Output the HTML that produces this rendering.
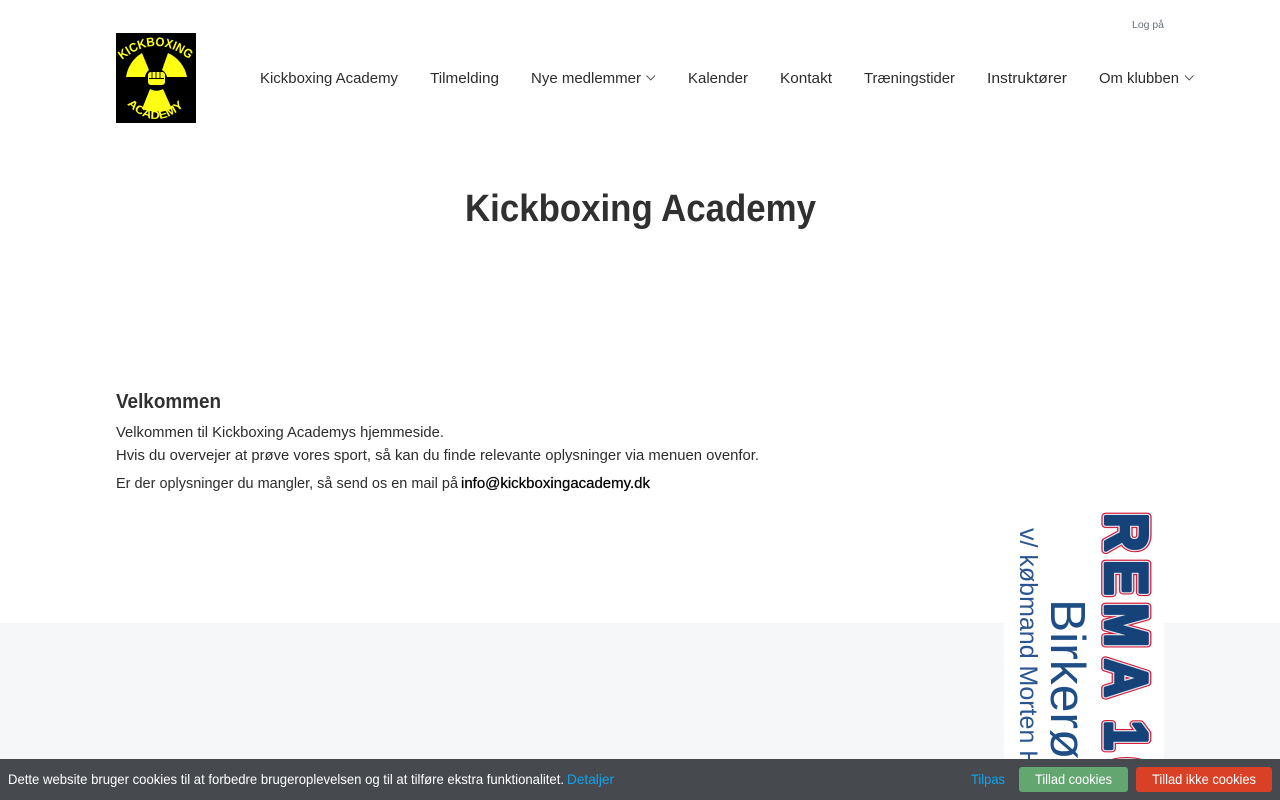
<!DOCTYPE html>
<html lang="da">
<head>
<meta charset="utf-8">
<title>Kickboxing Academy</title>
<style>
html,body{margin:0;padding:0;width:1280px;height:800px;overflow:hidden;background:#fff}
svg{position:absolute;left:0;top:0;display:block}
text{font-family:"Liberation Sans",sans-serif}
</style>
</head>
<body>
<svg width="1280" height="800" viewBox="0 0 1280 800" xmlns="http://www.w3.org/2000/svg">
  <rect x="0" y="623" width="1280" height="177" fill="#f6f7f9"/>

  <!-- Logo -->
  <rect x="116" y="33" width="80" height="90" fill="#000"/>
  <g fill="#ffff14">
    <path d="M142 53 A33 33 0 0 0 126 77 L145 77 A11 11 0 0 1 149 70Z"/>
    <path d="M168 53 A33 33 0 0 1 187 77 L167 77 A11 11 0 0 0 162 70Z"/>
    <path d="M150 89 L142 109 Q157 114 172 109 L163 89 A13 13 0 0 1 150 89Z"/>
    <rect x="148" y="72" width="17" height="13" rx="3"/>
  </g>
  <g stroke="#000" stroke-width=".9" fill="none"><path d="M152 72v6M156 72v6M160 72v6M149 78.5h15"/></g>
  <defs>
    <path id="arcT" d="M122 60 Q156 32 190 60"/>
    <path id="arcB" d="M127 104 Q156 134 186 104"/>
  </defs>
  <text font-size="12.5" font-weight="700" fill="#ffff14"><textPath href="#arcT" textLength="74" lengthAdjust="spacingAndGlyphs">KICKBOXING</textPath></text>
  <text font-size="11.5" font-weight="700" fill="#ffff14"><textPath href="#arcB" textLength="65" lengthAdjust="spacingAndGlyphs">ACADEMY</textPath></text>

  <!-- Top navigation -->
  <text x="1132" y="28" font-size="10.5" fill="#68717a" textLength="32" lengthAdjust="spacingAndGlyphs">Log på</text>
  <g font-size="15" fill="#2c2c2c">
    <text x="260" y="83" textLength="138" lengthAdjust="spacingAndGlyphs">Kickboxing Academy</text>
    <text x="430" y="83" textLength="69" lengthAdjust="spacingAndGlyphs">Tilmelding</text>
    <text x="531" y="83" textLength="110" lengthAdjust="spacingAndGlyphs">Nye medlemmer</text>
    <text x="688" y="83" textLength="60" lengthAdjust="spacingAndGlyphs">Kalender</text>
    <text x="780" y="83" textLength="52" lengthAdjust="spacingAndGlyphs">Kontakt</text>
    <text x="864" y="83" textLength="91" lengthAdjust="spacingAndGlyphs">Træningstider</text>
    <text x="987" y="83" textLength="80" lengthAdjust="spacingAndGlyphs">Instruktører</text>
    <text x="1099" y="83" textLength="80" lengthAdjust="spacingAndGlyphs">Om klubben</text>
  </g>
  <g fill="none" stroke="#333" stroke-width=".9">
    <path d="M646.5 75.5 L650.75 80 L655 75.5"/>
    <path d="M1185 75.5 L1189.25 80 L1193.5 75.5"/>
  </g>

  <!-- Heading -->
  <text x="465" y="221" font-size="38" font-weight="700" fill="#303030" textLength="351" lengthAdjust="spacingAndGlyphs">Kickboxing Academy</text>

  <!-- Content -->
  <text x="116" y="408" font-size="20" font-weight="700" fill="#303030" textLength="105" lengthAdjust="spacingAndGlyphs">Velkommen</text>
  <g font-size="15" fill="#2c2c2c">
    <text x="116" y="437" textLength="328" lengthAdjust="spacingAndGlyphs">Velkommen til Kickboxing Academys hjemmeside.</text>
    <text x="116" y="460" textLength="643" lengthAdjust="spacingAndGlyphs">Hvis du overvejer at prøve vores sport, så kan du finde relevante oplysninger via menuen ovenfor.</text>
    <text x="116" y="488" textLength="342" lengthAdjust="spacingAndGlyphs">Er der oplysninger du mangler, så send os en mail på</text>
  </g>
  <text x="461" y="488" font-size="15" fill="#000" stroke="#000" stroke-width=".25" textLength="189" lengthAdjust="spacingAndGlyphs">info@kickboxingacademy.dk</text>

  <!-- Sponsor banner -->
  <rect x="1004" y="505" width="160" height="260" fill="#fff"/>
  <g transform="translate(1105.5 513) rotate(90) scale(.78 .88)" font-weight="700" font-size="68" stroke-linejoin="round">
    <text x="0 60.3 115.4 187 266 315" y="0" fill="#d4213d" stroke="#d4213d" stroke-width="10">REMA10</text>
    <text x="0 60.3 115.4 187 266 315" y="0" fill="#dfe5ee" stroke="#dfe5ee" stroke-width="7">REMA10</text>
    <text x="0 60.3 115.4 187 266 315" y="0" fill="#16427a" stroke="#16427a" stroke-width="4">REMA10</text>
  </g>
  <text transform="translate(1051 599) rotate(90)" font-size="49" fill="#1f4d86" textLength="188" lengthAdjust="spacingAndGlyphs">Birkerød</text>
  <text transform="translate(1020 528) rotate(90)" font-size="25" fill="#2a5590">v/ købmand Morten Hansen</text>

  <!-- Cookie bar -->
  <rect x="0" y="759" width="1280" height="41" fill="#46494e"/>
  <text x="8" y="784" font-size="14" fill="#fff" textLength="556" lengthAdjust="spacingAndGlyphs">Dette website bruger cookies til at forbedre brugeroplevelsen og til at tilføre ekstra funktionalitet.</text>
  <text x="567" y="784" font-size="14" fill="#0ea5f0" textLength="47" lengthAdjust="spacingAndGlyphs">Detaljer</text>
  <text x="971" y="784" font-size="14" fill="#0ea5f0" textLength="34" lengthAdjust="spacingAndGlyphs">Tilpas</text>
  <rect x="1019" y="767" width="109" height="25" rx="3" fill="#63a670"/>
  <text x="1035" y="784" font-size="14" fill="#fff" textLength="77" lengthAdjust="spacingAndGlyphs">Tillad cookies</text>
  <rect x="1136" y="767" width="136" height="25" rx="3" fill="#d94026"/>
  <text x="1152" y="784" font-size="14" fill="#fff" textLength="104" lengthAdjust="spacingAndGlyphs">Tillad ikke cookies</text>
</svg>
</body>
</html>
